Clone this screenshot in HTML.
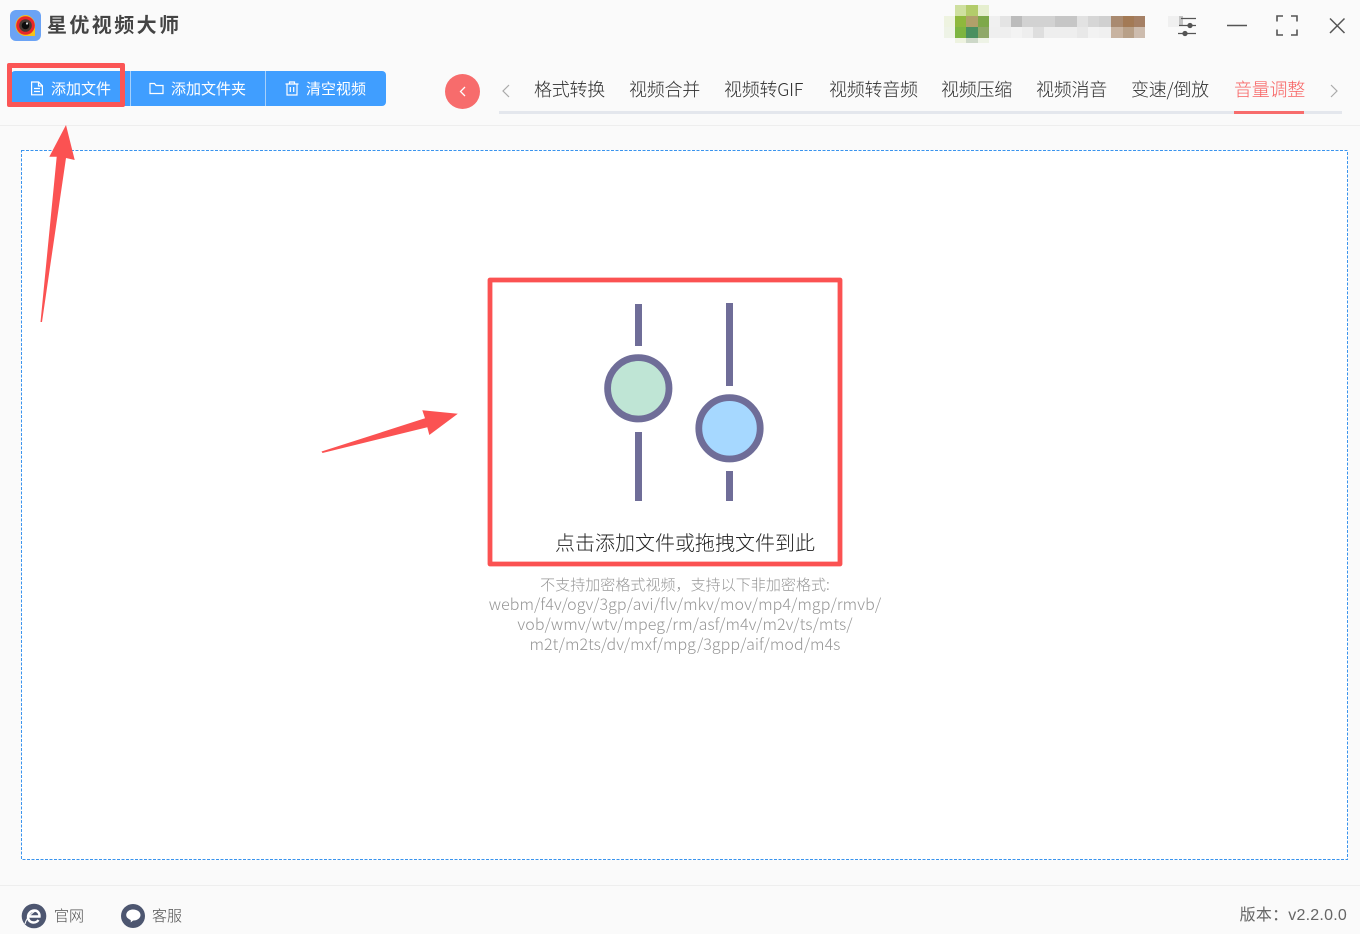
<!DOCTYPE html>
<html lang="zh"><head><meta charset="utf-8"><title>星优视频大师</title>
<style>
html,body{margin:0;padding:0}
body{width:1360px;height:934px;position:relative;overflow:hidden;background:#fafafa;font-family:"Liberation Sans","Noto Sans CJK SC",sans-serif;color:#333}
.a{position:absolute;white-space:nowrap}
.tab{position:absolute;top:76px;height:26px;line-height:26px;font-size:18px;font-weight:300;color:#2e2e2e;white-space:nowrap;font-family:"Noto Sans CJK SC",sans-serif;letter-spacing:-.25px}
.btxt{position:absolute;top:77px;line-height:24px;font-size:15px;color:#fff;white-space:nowrap;font-family:"Noto Sans CJK SC",sans-serif}
.g{position:absolute;left:385px;width:600px;text-align:center;font-size:16px;line-height:20px;color:#969696;white-space:nowrap;font-family:"Noto Sans CJK SC",sans-serif;font-weight:300}
.p{position:absolute}
</style></head><body>

<svg class="a" style="left:10px;top:10px" width="32" height="32" viewBox="0 0 32 32">
<rect x="0" y="0" width="31" height="31" rx="6" fill="#6ba3f5"/>
<path d="M16 5a10.500 10.500 0 1 0 0 21h9v-10.500A10.500 10.500 0 0 0 16 5z" fill="#f5c21b"/>
<circle cx="15.500" cy="15.500" r="9.300" fill="#e8262a"/>
<circle cx="15.500" cy="15.500" r="6.300" fill="#4a3a34"/>
<circle cx="15.500" cy="15.500" r="3.800" fill="#0c0c0c"/>
<circle cx="17" cy="13.500" r="1.100" fill="#ddd"/>
</svg>
<div class="a" style="left:47px;top:10px;font-size:20px;line-height:28px;font-weight:700;color:#444;letter-spacing:2.400px;font-family:'Noto Sans CJK SC',sans-serif">星优视频大师</div>

<!-- blurred mosaic -->
<svg class="a" style="left:940px;top:0" width="250" height="48" shape-rendering="crispEdges">
<g>
<rect x="15" y="5" width="11" height="11" fill="#cfe0a0"/><rect x="26" y="5" width="12" height="11" fill="#b3cc6a"/><rect x="38" y="5" width="11" height="11" fill="#e6efcf"/>
<rect x="4" y="16" width="11" height="11" fill="#eef3e0"/><rect x="15" y="16" width="11" height="11" fill="#8fb83c"/><rect x="26" y="16" width="12" height="11" fill="#b0a06a"/><rect x="38" y="16" width="11" height="11" fill="#7ea84a"/>
<rect x="49" y="16" width="11" height="11" fill="#f0f0f0"/><rect x="60" y="16" width="11" height="11" fill="#e4e4e4"/><rect x="71" y="16" width="11" height="11" fill="#bcbcbc"/><rect x="82" y="16" width="33" height="11" fill="#d2d2d2"/><rect x="115" y="16" width="22" height="11" fill="#c6c6c6"/><rect x="137" y="16" width="11" height="11" fill="#e2e2e2"/><rect x="148" y="16" width="11" height="11" fill="#d6d6d6"/><rect x="159" y="16" width="12" height="11" fill="#d0d0d0"/>
<rect x="171" y="16" width="12" height="11" fill="#a98a70"/><rect x="183" y="16" width="11" height="11" fill="#a37a55"/><rect x="194" y="16" width="11" height="11" fill="#a58065"/>
<rect x="228" y="16" width="11" height="11" fill="#f0f0f0"/>
<rect x="4" y="27" width="11" height="11" fill="#eef3e6"/><rect x="15" y="27" width="11" height="11" fill="#7db540"/><rect x="26" y="27" width="12" height="11" fill="#4a9060"/><rect x="38" y="27" width="11" height="11" fill="#8fa868"/>
<rect x="49" y="27" width="22" height="11" fill="#efefef"/><rect x="71" y="27" width="11" height="11" fill="#f3f3f3"/><rect x="82" y="27" width="11" height="11" fill="#eeeeee"/><rect x="93" y="27" width="11" height="11" fill="#dedede"/><rect x="104" y="27" width="33" height="11" fill="#eeeeee"/><rect x="137" y="27" width="11" height="11" fill="#e8e8e8"/><rect x="148" y="27" width="11" height="11" fill="#f2f2f2"/><rect x="159" y="27" width="12" height="11" fill="#f0f0f0"/>
<rect x="171" y="27" width="12" height="11" fill="#c8b3a0"/><rect x="183" y="27" width="11" height="11" fill="#b8a088"/><rect x="194" y="27" width="11" height="11" fill="#cdbcae"/>
<rect x="15" y="38" width="11" height="5" fill="#eef3e0"/><rect x="26" y="38" width="12" height="5" fill="#cdd8c8"/><rect x="38" y="38" width="11" height="5" fill="#eef3e6"/>
</g></svg>

<!-- window controls -->
<svg class="a" style="left:1170px;top:8px" width="185" height="34" viewBox="0 0 185 34" fill="none" stroke="#555" stroke-width="1.300">
<rect x="9" y="8" width="4" height="9" fill="#c4c4c4" stroke="none"/>
<path d="M11 10.500h15M9 17.500h17M8 25.500h18"/>
<circle cx="20" cy="17.500" r="2" fill="#555"/><circle cx="15" cy="25.500" r="2" fill="#555"/>
<path d="M57 17.500h20" stroke-width="1.500"/>
<path d="M107 13.500V8h6M121 8h6v5.500M107 21.500V27h6M121 27h6v-5.500" stroke-width="1.600"/>
<path d="M160 10.500l14.500 14.500M174.500 10.500L160 25" stroke-width="1.500"/>
</svg>

<!-- toolbar -->
<div class="p" style="left:11px;top:71px;width:375px;height:35px;background:#409eff;border-radius:4px"></div>
<div class="p" style="left:130px;top:71px;width:1px;height:35px;background:#a6d0fb"></div>
<div class="p" style="left:265px;top:71px;width:1px;height:35px;background:#a6d0fb"></div>
<div class="p" style="left:11px;top:66px;width:109px;height:5px;background:#fafafa"></div>
<svg class="a" style="left:30px;top:81px" width="14" height="15" viewBox="0 0 14 15" fill="none" stroke="#fff" stroke-width="1.200"><path d="M1.600 1h7l3.800 3.800v9H1.600zM8.500 1v4h3.900M4 7.500h6M4 10.500h6"/></svg>
<svg class="a" style="left:149px;top:82px" width="15" height="13" viewBox="0 0 15 13" fill="none" stroke="#fff" stroke-width="1.200"><path d="M1 1.500h4.500l1.500 2h7v8H1z"/></svg>
<svg class="a" style="left:285px;top:81px" width="14" height="15" viewBox="0 0 14 15" fill="none" stroke="#fff" stroke-width="1.200"><path d="M.5 3h13M4.500 3V1h5v2M2 3v11h10V3M5.300 6v5M8.700 6v5"/></svg>
<div class="btxt" style="left:51px">添加文件</div>
<div class="btxt" style="left:171px">添加文件夹</div>
<div class="btxt" style="left:306px">清空视频</div>
<div class="p" style="left:7px;top:63px;width:118px;height:44px;box-sizing:border-box;border:5px solid #fb5555;border-radius:2px"></div>

<!-- tabs -->
<div class="p" style="left:445px;top:74px;width:35px;height:35px;border-radius:50%;background:#f76c6c"></div>
<svg class="a" style="left:445px;top:74px" width="35" height="35" fill="none" stroke="#fff" stroke-width="1.300"><path d="M20 13l-4.500 4.500 4.500 4.500"/></svg>
<svg class="a" style="left:500px;top:83px" width="12" height="16" fill="none" stroke="#aaa" stroke-width="1.200"><path d="M9 2L3 8l6 6"/></svg>
<svg class="a" style="left:1328px;top:83px" width="12" height="16" fill="none" stroke="#aaa" stroke-width="1.200"><path d="M3 2l6 6-6 6"/></svg>
<div class="tab" style="left:534px">格式转换</div>
<div class="tab" style="left:629px">视频合并</div>
<div class="tab" style="left:724px">视频转GIF</div>
<div class="tab" style="left:829px">视频转音频</div>
<div class="tab" style="left:941px">视频压缩</div>
<div class="tab" style="left:1036px">视频消音</div>
<div class="tab" style="left:1131px">变速/倒放</div>
<div class="tab" style="left:1234px;color:#f76262">音量调整</div>
<div class="p" style="left:499px;top:111px;width:843px;height:3px;background:#e4e7ed"></div>
<div class="p" style="left:1234px;top:111px;width:70px;height:3px;background:#f76c6c"></div>
<div class="p" style="left:0;top:125px;width:1360px;height:1px;background:#eeeeee"></div>

<!-- drop area -->
<div class="p" style="left:21px;top:150px;width:1327px;height:710px;background:#fff"></div>
<svg class="a" style="left:0;top:0" width="1360" height="934"><rect x="21.500" y="150.500" width="1326" height="709" fill="none" stroke="#3a94ee" stroke-width="1" stroke-dasharray="3 1.500" shape-rendering="crispEdges"/></svg>

<svg class="a" style="left:0;top:0;pointer-events:none" width="1360" height="934">
<polygon points="66,125 49.300,156.700 56.700,156.700 40.500,322 42,322 66,158 74.700,160" fill="#fb5252"/>
<polygon points="321.500,451.500 425,418.300 422.300,410.300 457.800,413.700 429.300,435 427.300,427.300 322.500,453" fill="#fb5252"/>
<g fill="#6f6d98">
<rect x="635" y="304" width="7" height="42"/><rect x="635" y="432" width="7" height="69"/>
<rect x="726" y="303" width="7" height="83"/><rect x="726" y="471" width="7" height="30"/>
</g>
<circle cx="638.300" cy="388.300" r="30.700" fill="#bfe5d5" stroke="#6f6d98" stroke-width="6.800"/>
<circle cx="729.500" cy="428.300" r="30.700" fill="#a6d8ff" stroke="#6f6d98" stroke-width="6.800"/>
<rect x="490" y="280" width="350" height="284" fill="none" stroke="#fb5252" stroke-width="4.800" stroke-linejoin="round"/>
</svg>

<div class="a" style="left:555px;top:527px;font-size:20px;line-height:30px;color:#222;font-weight:300;font-family:'Noto Sans CJK SC',sans-serif">点击添加文件或拖拽文件到此</div>
<div class="g" style="top:575px;font-size:15px;letter-spacing:.05px">不支持加密格式视频，支持以下非加密格式:</div>
<div class="g" style="top:593px;letter-spacing:.08px">webm/f4v/ogv/3gp/avi/flv/mkv/mov/mp4/mgp/rmvb/</div>
<div class="g" style="top:613px;letter-spacing:.05px">vob/wmv/wtv/mpeg/rm/asf/m4v/m2v/ts/mts/</div>
<div class="g" style="top:633px;letter-spacing:.05px">m2t/m2ts/dv/mxf/mpg/3gpp/aif/mod/m4s</div>

<!-- footer -->
<div class="p" style="left:0;top:885px;width:1360px;height:1px;background:#eeeeee"></div>
<svg class="a" style="left:20px;top:902px" width="180" height="28" viewBox="0 0 180 28">
<circle cx="14" cy="14" r="12.300" fill="#4d5670"/>
<path d="M9 14.500h10.500c.3-3.500-2-6-5-6-3.800 0-6.500 3-6.500 6.500 0 3.300 2.400 5.500 5.500 5.500 2.300 0 4-1 5-2.500" fill="none" stroke="#fff" stroke-width="2.400"/>
<path d="M5 22c1-5 6-11 12-14" fill="none" stroke="#fff" stroke-width="1"/>
<circle cx="113" cy="14" r="12" fill="#4d5670"/>
<path d="M113 7.500c4.500 0 7.500 2.500 7.500 5.500s-3 5.500-7 5.500c-1 0-1.500 1.500-3 1.700.6-1 .5-2-.3-2.500-2.300-1-4-2.500-4-4.700 0-3 2.800-5.500 6.800-5.500z" fill="#fff"/>
</svg>
<div class="a" style="left:54px;top:905px;font-size:15px;line-height:22px;color:#4d4d4d;font-family:'Noto Sans CJK SC',sans-serif;font-weight:300">官网</div>
<div class="a" style="left:152px;top:905px;font-size:15px;line-height:22px;color:#4d4d4d;font-family:'Noto Sans CJK SC',sans-serif;font-weight:300">客服</div>
<div class="a" style="right:13px;top:905px;font-size:16px;line-height:22px;color:#666;letter-spacing:.22px">版本：v2.2.0.0</div>
</body></html>
